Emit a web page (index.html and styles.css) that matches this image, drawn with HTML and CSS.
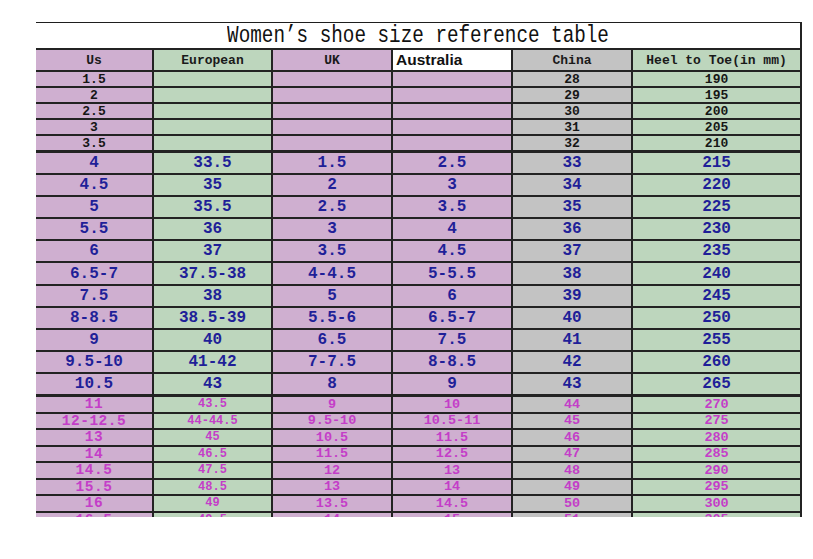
FILE: index.html
```html
<!DOCTYPE html>
<html lang="en">
<head>
<meta charset="utf-8">
<title>Women's shoe size reference table</title>
<link rel="stylesheet" href="styles.css">
</head>
<body>
<div class="sheet">
  <table class="sizes">
    <colgroup>
      <col class="w-us"><col class="w-eu"><col class="w-uk"><col class="w-au"><col class="w-cn"><col class="w-mm">
    </colgroup>
    <thead>
      <tr class="title-row"><th colspan="6"><span class="title">Women’s shoe size reference table</span></th></tr>
      <tr class="head-row">
        <th>Us</th><th>European</th><th>UK</th><th class="au">Australia</th><th>China</th><th>Heel to Toe(in mm)</th>
      </tr>
    </thead>
    <tbody class="small">
      <tr><td>1.5</td><td></td><td></td><td></td><td>28</td><td>190</td></tr>
      <tr><td>2</td><td></td><td></td><td></td><td>29</td><td>195</td></tr>
      <tr><td>2.5</td><td></td><td></td><td></td><td>30</td><td>200</td></tr>
      <tr><td>3</td><td></td><td></td><td></td><td>31</td><td>205</td></tr>
      <tr><td>3.5</td><td></td><td></td><td></td><td>32</td><td>210</td></tr>
    </tbody>
    <tbody class="main">
      <tr><td>4</td><td>33.5</td><td>1.5</td><td>2.5</td><td>33</td><td>215</td></tr>
      <tr><td>4.5</td><td>35</td><td>2</td><td>3</td><td>34</td><td>220</td></tr>
      <tr><td>5</td><td>35.5</td><td>2.5</td><td>3.5</td><td>35</td><td>225</td></tr>
      <tr><td>5.5</td><td>36</td><td>3</td><td>4</td><td>36</td><td>230</td></tr>
      <tr><td>6</td><td>37</td><td>3.5</td><td>4.5</td><td>37</td><td>235</td></tr>
      <tr><td>6.5-7</td><td>37.5-38</td><td>4-4.5</td><td>5-5.5</td><td>38</td><td>240</td></tr>
      <tr><td>7.5</td><td>38</td><td>5</td><td>6</td><td>39</td><td>245</td></tr>
      <tr><td>8-8.5</td><td>38.5-39</td><td>5.5-6</td><td>6.5-7</td><td>40</td><td>250</td></tr>
      <tr><td>9</td><td>40</td><td>6.5</td><td>7.5</td><td>41</td><td>255</td></tr>
      <tr><td>9.5-10</td><td>41-42</td><td>7-7.5</td><td>8-8.5</td><td>42</td><td>260</td></tr>
      <tr><td>10.5</td><td>43</td><td>8</td><td>9</td><td>43</td><td>265</td></tr>
    </tbody>
    <tbody class="large">
      <tr><td>11</td><td>43.5</td><td>9</td><td>10</td><td>44</td><td>270</td></tr>
      <tr><td>12-12.5</td><td>44-44.5</td><td>9.5-10</td><td>10.5-11</td><td>45</td><td>275</td></tr>
      <tr><td>13</td><td>45</td><td>10.5</td><td>11.5</td><td>46</td><td>280</td></tr>
      <tr><td>14</td><td>46.5</td><td>11.5</td><td>12.5</td><td>47</td><td>285</td></tr>
      <tr><td>14.5</td><td>47.5</td><td>12</td><td>13</td><td>48</td><td>290</td></tr>
      <tr><td>15.5</td><td>48.5</td><td>13</td><td>14</td><td>49</td><td>295</td></tr>
      <tr><td>16</td><td>49</td><td>13.5</td><td>14.5</td><td>50</td><td>300</td></tr>
      <tr><td>16.5</td><td>49.5</td><td>14</td><td>15</td><td>51</td><td>305</td></tr>
    </tbody>
  </table>
</div>
</body>
</html>
```
FILE: styles.css
```css
html, body {
  margin: 0;
  padding: 0;
  background: #ffffff;
}

.sheet {
  padding: 22px 0 0 36px;
  height: 517px;
  overflow: hidden;
  box-sizing: border-box;
}

.sizes {
  border-collapse: collapse;
  table-layout: fixed;
  width: 765px;
  font-family: "Liberation Mono", "DejaVu Sans Mono", monospace;
  font-weight: bold;
  color: #141414;
}

.w-us { width: 117px; }
.w-eu { width: 119px; }
.w-uk { width: 120px; }
.w-au { width: 120px; }
.w-cn { width: 120px; }
.w-mm { width: 169px; }

.sizes th,
.sizes td {
  padding: 0;
  text-align: center;
  vertical-align: middle;
  border: 2px solid #232323;
  white-space: nowrap;
  overflow: hidden;
  line-height: 1;
}

.sizes tr > :first-child { border-left: none; }

/* title */
.title-row th {
  height: 25px;
  background: #ffffff;
  border-top: 1px solid #1e1e1e;
  border-bottom: 1px solid #3a3a3a;
  font-weight: normal;
}
.title {
  display: inline-block;
  font-size: 19.3px;
  color: #111;
  transform: scaleY(1.22);
  padding-top: 3px;
}

/* header row */
.head-row th {
  height: 20px;
  font-size: 13px;
  color: #1a1a1a;
}

.head-row th.au {
  background: #ffffff;
  text-align: left;
  padding-left: 3px;
  font-family: "Liberation Sans", Arial, sans-serif;
  font-size: 15.5px;
  color: #111;
}

/* column colours */
.sizes tr > :nth-child(1),
.sizes tr > :nth-child(3),
.sizes tr > :nth-child(4) { background: #cfafd0; }
.sizes tr > :nth-child(2),
.sizes tr > :nth-child(6) { background: #bdd6bd; }
.sizes tr > :nth-child(5) { background: #c3c3c3; }
.sizes .title-row th { background: #ffffff; }
.sizes .head-row th.au { background: #ffffff; }

/* small rows (black) */
.small td {
  height: 14px;
  font-size: 13px;
  color: #161616;
}

/* main rows (blue) */
.main td {
  height: 20.1px;
  font-size: 16px;
  color: #1f1f98;
}
.main tr:first-child td { border-top-width: 3px; }
.main tr:last-child td { border-bottom-width: 3px; }

/* large rows (magenta) */
.large td {
  height: 13.6px;
  font-size: 13.5px;
  color: #c43ec8;
}
.large td:nth-child(1) { font-size: 14.5px; letter-spacing: 0.5px; }
.large td:nth-child(2) { font-size: 12px; }
```
